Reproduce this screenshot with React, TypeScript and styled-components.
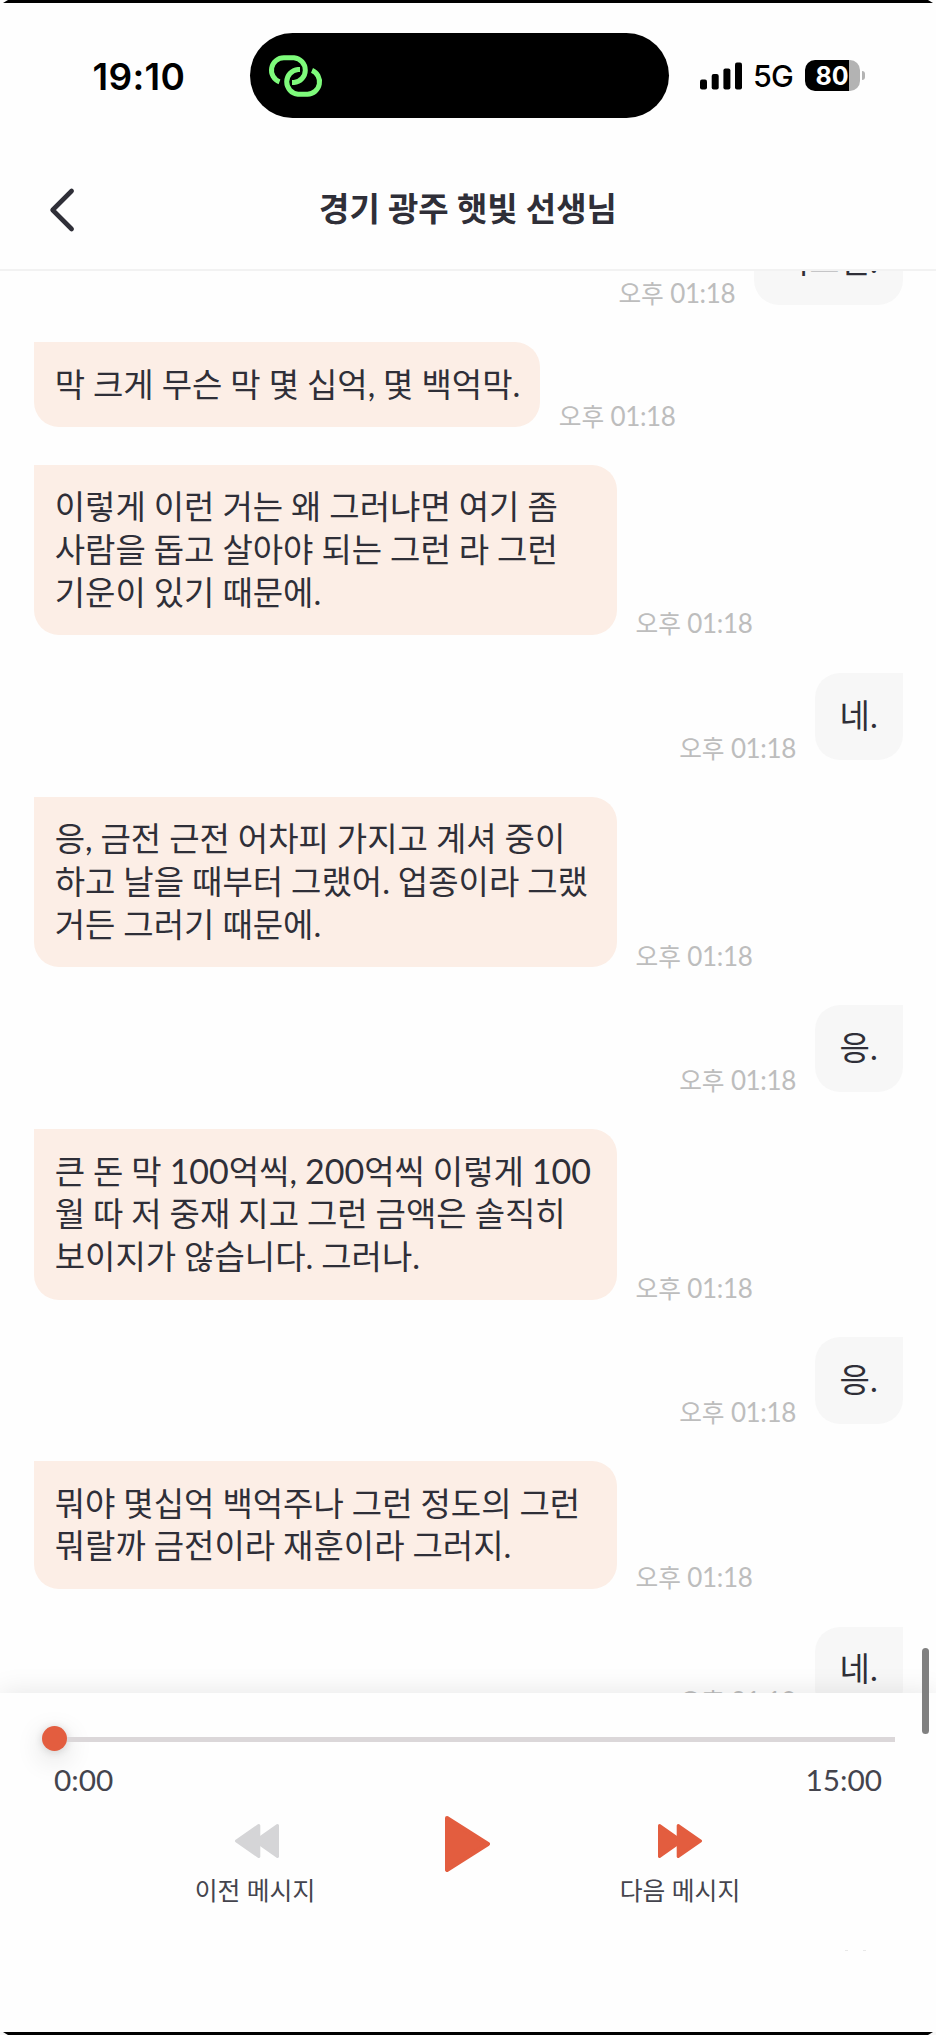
import React from 'react';
import styled, { createGlobalStyle, css } from 'styled-components';

const ink = '#2f2f38';
const accent = '#e35d3f';

const GlobalStyle = createGlobalStyle`
  * { box-sizing: border-box; }
  html, body { margin: 0; padding: 0; background: #fff; }
  body { font-family: Lato, "Noto Sans CJK KR", sans-serif; color: ${ink}; }
  button { border: 0; padding: 0; margin: 0; background: none; font: inherit; color: inherit; }
`;

const Screen = styled.div`
  position: relative;
  width: 936px;
  height: 2035px;
  display: flex;
  flex-direction: column;
  background: #fefefe;
  overflow: hidden;
`;

const Edge = styled.div<{ $bottom?: boolean }>`
  flex: none;
  height: 3px;
  background: #000;
  clip-path: ${(p) =>
    p.$bottom
      ? 'polygon(3px 0, 933px 0, 928px 100%, 8px 100%)'
      : 'polygon(8px 0, 928px 0, 933px 100%, 3px 100%)'};
`;

const StatusBar = styled.div`
  flex: none;
  height: 148px;
  display: grid;
  grid-template-columns: 250px 419px 1fr;
  align-items: start;
  padding-top: 29.5px;
  font-family: Inter, sans-serif;
  color: #000;
`;

const Clock = styled.div`
  padding-left: 92.5px;
  font-size: 37px;
  font-weight: 600;
  line-height: 87px;
  letter-spacing: 0.3px;
`;

const Island = styled.div`
  height: 85.5px;
  border-radius: 43px;
  background: #000;
  padding: 20px 0 0 17px;
`;

const Signals = styled.div`
  height: 86px;
  padding-left: 31px;
  display: flex;
  align-items: center;
`;

const Network = styled.span`
  width: 50px;
  padding-left: 10px;
  font-size: 30.5px;
  font-weight: 500;
  line-height: 36px;
  letter-spacing: -0.8px;
  padding-top: 1px;
`;

const Battery = styled.div`
  width: 55px;
  height: 31px;
  margin-left: 12px;
  border-radius: 10px;
  background: linear-gradient(to right, #000 44px, #b3b3b3 44px);
  color: #fff;
  font-size: 25px;
  font-weight: 700;
  line-height: 32px;
  padding-left: 10.5px;
`;

const BatteryTip = styled.div`
  width: 3px;
  height: 9px;
  margin-left: 2px;
  border-radius: 0 4px 4px 0;
  background: #b3b3b3;
`;

const Header = styled.header`
  flex: none;
  height: 120px;
  display: grid;
  grid-template-columns: 120px 1fr 120px;
  align-items: center;
  border-bottom: 2px solid #f2f2f2;
`;

const BackButton = styled.button`
  display: flex;
  padding-left: 46px;
`;

const Title = styled.h1`
  margin: 0;
  text-align: center;
  font-size: 33px;
  font-weight: 700;
  line-height: 44px;
  padding-bottom: 5px;
  word-spacing: 0.2px;
`;

const Messages = styled.main`
  flex: none;
  height: 1422px;
  overflow: hidden;
  padding: 0 33.3px 0 33.5px;
`;

const Thread = styled.div`
  display: flex;
  flex-direction: column;
  gap: 37.7px;
  margin-top: -52.8px;
`;

const Row = styled.div<{ $mine: boolean }>`
  display: flex;
  align-items: flex-end;
  flex-direction: ${(p) => (p.$mine ? 'row-reverse' : 'row')};
  gap: 18.6px;
`;

const Bubble = styled.div<{ $mine: boolean }>`
  max-width: 583.5px;
  font-size: 33px;
  line-height: 42.6px;
  word-spacing: -0.5px;
  white-space: pre;
  ${(p) =>
    p.$mine
      ? css`
          padding: 20.6px 25px 23.4px;
          border-radius: 25px 0 25px 25px;
          background: #f7f7f7;
        `
      : css`
          padding: 20.2px 19.8px 22.2px 21.2px;
          border-radius: 0 25px 25px 25px;
          background: #fceee6;
        `}
`;

const WideBubble = styled(Bubble)`
  width: 583.5px;
`;

const Digits = styled.span`
  font-size: 34px;
  line-height: 1;
`;

const Time = styled.time`
  font-size: 24.7px;
  line-height: 24px;
  margin-bottom: -1.2px;
  color: #bdbdbd;
  white-space: nowrap;
`;

const TimeDigits = styled.span`
  font-size: 26px;
  line-height: 1;
  letter-spacing: -0.35px;
`;

const Player = styled.section`
  position: relative;
  flex: 1;
  background: #fefefe;
  box-shadow: 0 0 26px rgba(0, 0, 0, 0.1);
  padding: 33px 41px 0 42px;
`;

const Slider = styled.div`
  height: 25px;
  display: flex;
  align-items: center;
`;

const Thumb = styled.div`
  flex: none;
  width: 25px;
  height: 25px;
  border-radius: 50%;
  background: ${accent};
  box-shadow: 0 8px 28px rgba(0, 0, 0, 0.16), 0 1px 8px rgba(0, 0, 0, 0.14);
`;

const Track = styled.div`
  flex: 1;
  height: 5px;
  margin-top: 1px;
  background: #dbd7d9;
`;

const Durations = styled.div`
  display: flex;
  justify-content: space-between;
  padding: 11px 13px 0 12px;
  font-size: 29.8px;
  line-height: 36px;
  color: #44444d;
`;

const Controls = styled.div`
  display: flex;
  align-items: flex-start;
  gap: 110px;
  padding: 18px 0 0 133px;
`;

const Control = styled.button`
  display: flex;
  flex-direction: column;
  align-items: center;
  width: 160px;
  font-size: 24.8px;
  line-height: 36px;
  color: #44444d;
  gap: 15.5px;
  padding-top: 7.5px;
`;

const PlayButton = styled.button`
  display: flex;
`;

const Ghost = styled.div`
  display: flex;
  justify-content: flex-end;
  gap: 15px;
  padding: 40.5px 29px 0 0;
  span { width: 3px; height: 1px; background: #e8e8e8; }
`;

const ScrollThumb = styled.div`
  position: absolute;
  top: 1647.5px;
  right: 7px;
  width: 7px;
  height: 86px;
  border-radius: 4px;
  background: #808080;
`;

type Message = { mine: boolean; lines: string[] };

const messages: Message[] = [
  { mine: true, lines: ['어그런.'] },
  { mine: false, lines: ['막 크게 무슨 막 몇 십억, 몇 백억막.'] },
  { mine: false, lines: ['이렇게 이런 거는 왜 그러냐면 여기 좀', '사람을 돕고 살아야 되는 그런 라 그런', '기운이 있기 때문에.'] },
  { mine: true, lines: ['네.'] },
  { mine: false, lines: ['응, 금전 근전 어차피 가지고 계셔 중이', '하고 날을 때부터 그랬어. 업종이라 그랬', '거든 그러기 때문에.'] },
  { mine: true, lines: ['응.'] },
  { mine: false, lines: ['큰 돈 막 100억씩, 200억씩 이렇게 100', '월 따 저 중재 지고 그런 금액은 솔직히', '보이지가 않습니다. 그러나.'] },
  { mine: true, lines: ['응.'] },
  { mine: false, lines: ['뭐야 몇십억 백억주나 그런 정도의 그런', '뭐랄까 금전이라 재훈이라 그러지.'] },
  { mine: true, lines: ['네.'] },
];

const withDigits = (text: string) =>
  text.split(/(\d+)/).map((part, i) => (i % 2 ? <Digits key={i}>{part}</Digits> : part));

const MessageRow = ({ mine, lines }: Message) => {
  const Shape = lines.length > 1 ? WideBubble : Bubble;
  return (
    <Row $mine={mine}>
      <Shape $mine={mine}>{withDigits(lines.join('\n'))}</Shape>
      <Time>
        오후 <TimeDigits>01:18</TimeDigits>
      </Time>
    </Row>
  );
};

const LinkIcon = () => (
  <svg width="56" height="46" viewBox="267 52 56 46" fill="none" stroke="#7efb7b" strokeWidth="5">
    <path d="M292 81.5H294A12.4 12.4 0 0 0 294 56.8H284A12.4 12.4 0 0 0 279.5 80.8" />
    <path d="M300 68.5H298A12.4 12.4 0 0 0 298 93.2H307.5A12.4 12.4 0 0 0 312 69.4" />
  </svg>
);

const SignalIcon = () => (
  <svg width="43" height="28" viewBox="0 0 43 28">
    <rect x="0" y="17.5" width="7" height="10" rx="2" />
    <rect x="11.7" y="12" width="7" height="15.5" rx="2" />
    <rect x="23.4" y="6.4" width="7" height="21.1" rx="2" />
    <rect x="35" y="0.5" width="7" height="27" rx="2" />
  </svg>
);

const SkipIcon = ({ color, flip }: { color: string; flip?: boolean }) => (
  <svg width="48" height="34" viewBox="-2 0 48 34">
    <g fill={color} stroke={color} strokeWidth="3" strokeLinejoin="round" transform={flip ? 'translate(46 0) scale(-1 1)' : undefined}>
      <path d="M1.5 1.5L23.5 17L1.5 32.5Z" />
      <path d="M20.2 1.5L42.5 17L20.2 32.5Z" />
    </g>
  </svg>
);

export default function App() {
  return (
    <Screen>
      <GlobalStyle />
      <Edge />
      <StatusBar>
        <Clock>19:10</Clock>
        <Island>
          <LinkIcon />
        </Island>
        <Signals>
          <SignalIcon />
          <Network>5G</Network>
          <Battery>80</Battery>
          <BatteryTip />
        </Signals>
      </StatusBar>
      <Header>
        <BackButton aria-label="뒤로">
          <svg width="32" height="46" viewBox="0 0 32 46" fill="none" stroke={ink} strokeWidth="4.6" strokeLinecap="round" strokeLinejoin="round">
            <path d="M25.6 4L6.6 23L25.6 42" />
          </svg>
        </BackButton>
        <Title>경기 광주 햇빛 선생님</Title>
      </Header>
      <Messages>
        <Thread>
          {messages.map((m, i) => (
            <MessageRow key={i} {...m} />
          ))}
        </Thread>
      </Messages>
      <Player>
        <Slider>
          <Thumb />
          <Track />
        </Slider>
        <Durations>
          <span>0:00</span>
          <span>15:00</span>
        </Durations>
        <Controls>
          <Control>
            <SkipIcon color="#d5d5d7" flip />
            이전 메시지
          </Control>
          <PlayButton aria-label="재생">
            <svg width="45" height="56" viewBox="0 0 45 56">
              <path d="M2 2L43 28L2 54Z" fill={accent} stroke={accent} strokeWidth="4" strokeLinejoin="round" />
            </svg>
          </PlayButton>
          <Control>
            <SkipIcon color={accent} />
            다음 메시지
          </Control>
        </Controls>
        <Ghost>
          <span />
          <span />
        </Ghost>
      </Player>
      <Edge $bottom />
      <ScrollThumb />
    </Screen>
  );
}
